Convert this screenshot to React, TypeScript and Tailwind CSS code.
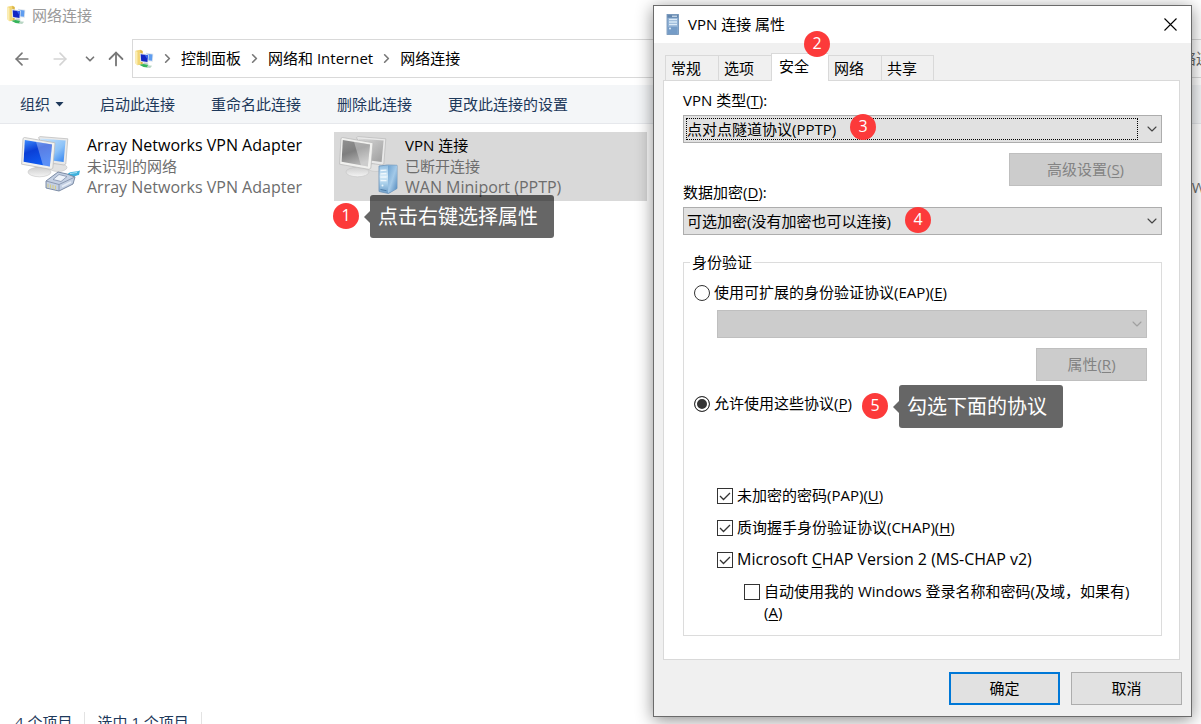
import { useState, type ReactNode } from "react";
import { ArrowLeft, ArrowRight, ArrowUp, ChevronDown, ChevronRight } from "lucide-react";

// Folder with a monitor and a green cable, used for "network connections"
function FolderIcon() {
  return (
    <svg viewBox="0 0 20 20" className="h-5 w-[19px] shrink-0" aria-hidden="true">
      <path d="M0.5 1.2 L5.5 0.2 L8 1.5 V15.5 L2.5 16.5 L0.5 14.5 Z" fill="#f3d675" />
      <path d="M0.5 1.2 L2.6 2.6 V16.5 L0.5 14.5 Z" fill="#fbeeb4" />
      <path d="M5.5 0.2 L8 1.5 V15.5 L6.5 15.8 Z" fill="#d9b447" />
      <path d="M11.5 3.5 L19.3 4.5 L18.8 13 L11.5 12 Z" fill="#dfe6ee" />
      <path d="M12.2 4.5 L18.4 5.3 L17.9 11.8 L12 11 Z" fill="#5f9df0" />
      <path d="M5 3.8 L14.5 5.2 L14 14.4 L5.6 13 Z" fill="#e3e8ee" />
      <path d="M6 5 L13.6 6.1 L13.1 13.2 L6.5 12 Z" fill="#1226c4" />
      <path d="M10 5.6 L13.6 6.1 L13.3 10.5 Z" fill="#3a68ee" />
      <path d="M9.5 13.8 L12.5 14 L14.5 15.5 L8 15.3 Z" fill="#c2c8ce" />
      <path d="M4.5 16 L9 15.2 L14 16 L13.3 19 L9 18.4 Z" fill="#35b45a" />
      <path d="M13.5 16.5 L18 17 L16 19.5 L12.5 19 Z" fill="#b9d6c4" />
    </svg>
  );
}

function ServerTower() {
  return (
    <>
      <defs>
        <linearGradient id="towerFront" x1="0" x2="0" y1="0" y2="1">
          <stop offset="0" stopColor="#8dbbe0" />
          <stop offset="0.4" stopColor="#d5ebf8" />
          <stop offset="0.65" stopColor="#a9cfea" />
          <stop offset="1" stopColor="#6b9cc8" />
        </linearGradient>
        <linearGradient id="towerSide" x1="0" x2="1" y1="0" y2="1">
          <stop offset="0" stopColor="#6fa3d0" />
          <stop offset="0.5" stopColor="#a3c9e8" />
          <stop offset="1" stopColor="#4f86ba" />
        </linearGradient>
      </defs>
      <path d="M0.5 1.5 L9 0.5 L18.5 0.8 V24 L10 29 L0.5 27 Z" fill="url(#towerFront)" stroke="#6c93b8" strokeWidth="0.8" />
      <path d="M9.5 1.2 L18.5 1 V24 L9.5 28.6 Z" fill="url(#towerSide)" />
      <path d="M2 6 L8 5.6 M2 9.3 L8 9 M2 12.6 L8 12.5 M2 16 L8 16.2" stroke="#f0f8fd" strokeWidth="1.3" />
      <circle cx="4" cy="21" r="1" fill="#eaf6fd" />
      <path d="M2 25 L8 26.2" stroke="#4b7ba6" strokeWidth="1" />
    </>
  );
}

function Monitors({ active }: { active: boolean }) {
  const screen = active ? "url(#screenOn)" : "url(#screenOff)";
  const back = active ? "url(#backOn)" : "url(#backOff)";
  return (
    <svg viewBox="0 0 60 60" className="h-[60px] w-[60px] shrink-0" aria-hidden="true">
      <defs>
        <linearGradient id="screenOn" x1="0" x2="0.4" y1="0" y2="1">
          <stop offset="0" stopColor="#3f8dfd" />
          <stop offset="0.45" stopColor="#0b3fd6" />
          <stop offset="1" stopColor="#0f5cf2" />
        </linearGradient>
        <linearGradient id="backOn" x1="0" x2="1" y1="0" y2="1">
          <stop offset="0" stopColor="#cfe7fb" />
          <stop offset="0.6" stopColor="#8cc2f8" />
          <stop offset="1" stopColor="#2d7ff0" />
        </linearGradient>
        <linearGradient id="screenOff" x1="0" x2="0.4" y1="0" y2="1">
          <stop offset="0" stopColor="#929292" />
          <stop offset="0.5" stopColor="#7f7f7f" />
          <stop offset="1" stopColor="#b5b5b5" />
        </linearGradient>
        <linearGradient id="backOff" x1="0" x2="1" y1="0" y2="1">
          <stop offset="0" stopColor="#dadada" />
          <stop offset="1" stopColor="#9d9d9d" />
        </linearGradient>
        <linearGradient id="stand" x1="0" x2="0" y1="0" y2="1">
          <stop offset="0" stopColor="#cdcdcd" />
          <stop offset="1" stopColor="#f4f4f4" />
        </linearGradient>
      </defs>
      <ellipse cx="37" cy="32.5" rx="9" ry="4" fill="#e2e2e2" stroke="#c4c4c4" strokeWidth="0.6" />
      <path d="M17.5 2.6 L19 1.6 L46.8 3.8 L44.8 29 L43 30 L30 28 Z" fill="#e9e9e9" stroke="#b9b9b9" strokeWidth="0.7" />
      <path d="M19 3.6 L44.6 5.6 L42.6 27 L31 25.4 Z" fill={back} />
      <path d="M15 30 L23 31 L25 37 L12.5 37 Z" fill="#d4d4d4" />
      <ellipse cx="18.5" cy="37" rx="11.5" ry="4.8" fill="url(#stand)" stroke="#c4c4c4" strokeWidth="0.6" />
      <path d="M2 3.4 L3.5 2.5 L34 7.8 L31.8 33.2 L30 34.4 L0.6 29.2 Z" fill="#f1f1ef" stroke="#b6b6b6" strokeWidth="0.7" />
      <path d="M3.8 5 L31 9.4 L28.8 31.6 L2.6 26.8 Z" fill={screen} />
      <path d="M15 6.8 L31 9.4 L28.8 31.6 L22 30.4 Z" fill="#fff" opacity="0.32" />
      {active ? (
        <g>
          <path d="M45 41 C49 35 52 38 59 35.5 L58 40 C54 40 52 44 47 45 Z" fill="#3fb1dc" />
          <path d="M49 38.5 L56 37.5" stroke="#a9e2f5" strokeWidth="1" />
          <path d="M25 46 L37 37 L46 39 L54 42 L52 49 L38 56 L25 53 Z" fill="#c4d0e3" stroke="#71819c" strokeWidth="0.9" />
          <path d="M25 46 L38 49.5 L54 42 M38 49.5 V56" fill="none" stroke="#8493ad" strokeWidth="0.9" />
          <path d="M32 44.5 L38 39.5 L46 41.5 L40 46.5 Z" fill="#eef3fa" stroke="#8291ac" strokeWidth="0.8" />
          <path d="M41 51.5 L50 47" stroke="#e6edf7" strokeWidth="1.8" />
          <path d="M27 48.8 V52.6 M29.5 49.5 V53.2 M32 50.1 V53.8 M34.5 50.7 V54.4" stroke="#d6cd8b" strokeWidth="1.1" />
        </g>
      ) : (
        <g transform="translate(39.5 29.5)">
          <ServerTower />
        </g>
      )}
    </svg>
  );
}

function Badge({ n, className }: { n: number; className: string }) {
  return (
    <span className={`absolute z-10 flex h-[26px] w-[26px] items-center justify-center rounded-full bg-[#fc3a3a] pb-0.5 text-base leading-none text-white ${className}`}>
      {n}
    </span>
  );
}

function Callout({ children, className }: { children: ReactNode; className: string }) {
  return (
    <div className={`absolute z-10 flex items-center ${className}`}>
      <span className="border-y-[6px] border-r-[6px] border-y-transparent border-r-black/60" />
      <span className="rounded-[3px] bg-black/60 py-[7px] pr-4 pl-2 text-xl leading-[29px] whitespace-nowrap text-white">{children}</span>
    </div>
  );
}

function Key({ children }: { children: string }) {
  return <span className="underline underline-offset-2">{children}</span>;
}

interface ConnectionProps {
  name: string;
  status: string;
  device: string;
  active: boolean;
}

function Connection({ name, status, device, active }: ConnectionProps) {
  return (
    <>
      <Monitors active={active} />
      <div className="ml-1.5 whitespace-nowrap text-[#6d6d6d]">
        <p className={active ? "text-base leading-[21px] text-black" : "text-black"}>{name}</p>
        <p>{status}</p>
        <p className="text-base leading-[21px]">{device}</p>
      </div>
    </>
  );
}

interface DropProps {
  id: string;
  value: string;
  label?: string;
  focused?: boolean;
  disabled?: boolean;
}

function Drop({ id, value, label, focused, disabled }: DropProps) {
  return (
    <div className="relative">
      <select
        id={id}
        aria-label={label}
        disabled={disabled}
        className="block h-7 w-full appearance-none border border-[#adadad] bg-[#e1e1e1] pr-7 pl-[3px] text-black opacity-100 outline-none disabled:border-[#bfbfbf] disabled:bg-[#cccccc]"
      >
        <option>{value}</option>
      </select>
      {focused && <span className="pointer-events-none absolute inset-y-[3px] right-6 left-[3px] border border-dotted border-black" />}
      <ChevronDown
        strokeWidth={1.6}
        className={`pointer-events-none absolute top-1.5 right-0.5 h-4 w-4 ${disabled ? "text-[#a0a0a0]" : "text-[#444]"}`}
      />
    </div>
  );
}

interface CheckProps {
  id: string;
  initial: boolean;
  className?: string;
  children: ReactNode;
}

function Check({ id, initial, className = "", children }: CheckProps) {
  const [checked, setChecked] = useState(initial);
  return (
    <div className={`flex items-start gap-1 ${className}`}>
      <span className="relative mt-[3px] h-4 w-4 shrink-0">
        <input
          id={id}
          type="checkbox"
          checked={checked}
          onChange={(e) => setChecked(e.target.checked)}
          className="block h-4 w-4 appearance-none border border-[#333] bg-white"
        />
        {checked && (
          <svg viewBox="0 0 16 16" className="pointer-events-none absolute inset-0" aria-hidden="true">
            <path d="M3 8 L6.5 11.5 L13 5" fill="none" stroke="#333" strokeWidth="1.3" />
          </svg>
        )}
      </span>
      <label htmlFor={id}>{children}</label>
    </div>
  );
}

interface RadioProps {
  id: string;
  checked: boolean;
  onSelect: () => void;
  children: ReactNode;
}

function Radio({ id, checked, onSelect, children }: RadioProps) {
  return (
    <div className="flex items-center gap-1">
      <input
        id={id}
        type="radio"
        name="auth"
        checked={checked}
        onChange={onSelect}
        className="h-4 w-4 appearance-none rounded-full border border-[#333] bg-white checked:bg-[#333] checked:shadow-[inset_0_0_0_2px_#fff]"
      />
      <label htmlFor={id}>{children}</label>
    </div>
  );
}

const tabs = ["常规", "选项", "安全", "网络", "共享"];
const crumbs = ["控制面板", "网络和 Internet", "网络连接"];
const commands = ["启动此连接", "重命名此连接", "删除此连接", "更改此连接的设置"];

function PropertiesDialog() {
  const [auth, setAuth] = useState("list");

  return (
    <section
      role="dialog"
      aria-labelledby="dialog-title"
      className="absolute top-[5px] right-[9px] w-[539px] border border-[#6b6b6b] bg-[#f0f0f0] text-black shadow-[0_3px_16px_rgba(0,0,0,0.45)]"
    >
      <header className="flex h-[37px] items-center bg-white pr-3.5 pl-3">
        <svg viewBox="0 0 14 21" className="h-[21px] w-3.5" aria-hidden="true">
          <rect x="1" y="0.5" width="11.5" height="20" fill="#8fb0d4" stroke="#6d8fb5" strokeWidth="0.8" />
          <rect x="1.4" y="0.8" width="10.7" height="3" fill="#6487ae" />
          <path d="M3 5.5 H11 M3 8 H11 M3 10.5 H11" stroke="#dcebf8" strokeWidth="1.3" />
          <path d="M6 2.2 H11" stroke="#e8f2fb" strokeWidth="1" />
          <rect x="2" y="13" width="9.5" height="7" fill="#759cc7" />
          <circle cx="4" cy="14.5" r="0.9" fill="#e8f4ff" />
        </svg>
        <h2 id="dialog-title" className="ml-2">VPN 连接 属性</h2>
        <button type="button" aria-label="关闭" className="ml-auto">
          <svg viewBox="0 0 13 13" className="h-[13px] w-[13px]" aria-hidden="true">
            <path d="M0.5 0.5 L12.5 12.5 M12.5 0.5 L0.5 12.5" stroke="#000" strokeWidth="1.1" />
          </svg>
        </button>
      </header>

      <div className="pt-2.5 pr-[11px] pl-[9px]">
        <div role="tablist" className="relative flex items-end pl-0.5">
          {tabs.map((tab) => (
            <button
              key={tab}
              type="button"
              role="tab"
              aria-selected={tab === "安全"}
              className={
                tab === "安全"
                  ? "relative -mb-px h-7 w-[57px] border-t border-l border-[#d9d9d9] bg-white pb-0.5 pl-[7px] text-left"
                  : "h-[25px] w-[53px] border-t border-l border-[#d9d9d9] pl-[5px] text-left last-of-type:border-r"
              }
            >
              {tab}
            </button>
          ))}
          <Badge n={2} className="-top-[22px] left-[141px]" />
        </div>

        <div role="tabpanel" className="border border-[#d9d9d9] bg-white pt-[9px] pr-[17px] pb-[23px] pl-[19px]">
          <label htmlFor="vpn-type" className="block">
            VPN 类型(<Key>T</Key>):
          </label>
          <div className="relative mt-1">
            <Drop id="vpn-type" value="点对点隧道协议(PPTP)" focused />
            <Badge n={3} className="-top-px left-[167px]" />
          </div>
          <div className="mt-2.5 flex items-start justify-between">
            <label htmlFor="encryption" className="pt-[29px]">
              数据加密(<Key>D</Key>):
            </label>
            <button type="button" disabled className="h-[33px] w-[153px] border border-[#bfbfbf] bg-[#cccccc] text-[#838383]">
              高级设置(<Key>S</Key>)
            </button>
          </div>
          <div className="relative mt-1">
            <Drop id="encryption" value="可选加密(没有加密也可以连接)" />
            <Badge n={4} className="top-0 left-[222px]" />
          </div>

          <fieldset className="mt-[17px] border border-[#dcdcdc] pb-3">
            <legend className="ml-1.5 px-0.5">身份验证</legend>
            <div className="mt-[9px] ml-2.5">
              <Radio id="eap" checked={auth === "eap"} onSelect={() => setAuth("eap")}>
                使用可扩展的身份验证协议(EAP)(<Key>E</Key>)
              </Radio>
            </div>
            <div className="mt-[7px] mr-3.5 ml-[33px]">
              <Drop id="eap-type" label="EAP" value="" disabled />
              <button type="button" disabled className="mt-2.5 ml-auto block h-[33px] w-[111px] border border-[#bfbfbf] bg-[#cccccc] text-[#838383]">
                属性(<Key>R</Key>)
              </button>
            </div>
            <div className="relative mt-3 ml-2.5">
              <Radio id="protocols" checked={auth === "list"} onSelect={() => setAuth("list")}>
                允许使用这些协议(<Key>P</Key>)
              </Radio>
              <Badge n={5} className="top-0 left-[168px]" />
              <Callout className="-top-2 left-[199px]">勾选下面的协议</Callout>
            </div>
            <div className="mt-[71px] ml-[33px] flex flex-col gap-[11px]">
              <Check id="pap" initial>
                未加密的密码(PAP)(<Key>U</Key>)
              </Check>
              <Check id="chap" initial>
                质询握手身份验证协议(CHAP)(<Key>H</Key>)
              </Check>
              <Check id="mschap" initial>
                <span className="text-base leading-[21px]">
                  Microsoft <Key>C</Key>HAP Version 2 (MS-CHAP v2)
                </span>
              </Check>
              <Check id="auto" initial={false} className="ml-[27px]">
                自动使用我的 Windows 登录名称和密码(及域，如果有)
                <br />(<Key>A</Key>)
              </Check>
            </div>
          </fieldset>
        </div>
      </div>

      <footer className="flex justify-end gap-[11px] pt-3 pr-[9px] pb-[11px]">
        <button type="button" className="h-[33px] w-[111px] border-2 border-[#0078d7] bg-[#e1e1e1]">
          确定
        </button>
        <button type="button" className="h-[33px] w-[111px] border border-[#adadad] bg-[#e1e1e1]">
          取消
        </button>
      </footer>
    </section>
  );
}

export default function App() {
  return (
    <div className="relative flex h-screen flex-col overflow-hidden bg-white font-['Open_Sans','Noto_Sans_CJK_SC',sans-serif] text-[15px] leading-[21px] text-black">
      <header className="flex h-[39px] items-start gap-1.5 pt-[5px] pl-[7px] text-[#999]">
        <FolderIcon />
        <h1>网络连接</h1>
      </header>

      <div className="flex h-[39px]">
        <div className="flex w-[132px] shrink-0 items-center pl-3 text-[#777]">
          <button type="button" aria-label="后退">
            <ArrowLeft className="h-5 w-5" strokeWidth={2} />
          </button>
          <button type="button" aria-label="前进" className="ml-[18px] text-[#d4d4d4]">
            <ArrowRight className="h-5 w-5" strokeWidth={2} />
          </button>
          <button type="button" aria-label="历史" className="ml-[13px]">
            <ChevronDown className="h-3.5 w-3.5" strokeWidth={3} />
          </button>
          <button type="button" aria-label="向上" className="ml-2">
            <ArrowUp className="h-[22px] w-[22px]" strokeWidth={2} />
          </button>
        </div>
        <nav className="flex grow items-center overflow-hidden border-y border-l border-[#d9d9d9] pl-0.5 whitespace-nowrap">
          <FolderIcon />
          {crumbs.map((crumb) => (
            <span key={crumb} className="flex items-center">
              <ChevronRight className="mx-1.5 h-[15px] w-[15px] text-[#777]" strokeWidth={2.6} />
              <a href="#">{crumb}</a>
            </span>
          ))}
          <span className="ml-auto w-5 text-[#666]">络连</span>
        </nav>
      </div>

      <div className="mt-[7px] flex h-[39px] shrink-0 items-center gap-9 border-b border-[#e6e8ec] bg-[#f4f6f8] pl-5 text-[#1e395b]">
        <button type="button" className="flex items-center gap-[5px]">
          组织
          <svg viewBox="0 0 9 5" className="h-[5px] w-[9px]" aria-hidden="true">
            <path d="M0.5 0 H8.5 L4.5 4.5 Z" fill="#1e395b" />
          </svg>
        </button>
        {commands.map((command) => (
          <button key={command} type="button">
            {command}
          </button>
        ))}
      </div>

      <main className="flex grow items-start pt-2">
        <div className="flex w-[334px] shrink-0 pt-[3px] pl-[21px]">
          <Connection name="Array Networks VPN Adapter" status="未识别的网络" device="Array Networks VPN Adapter" active />
        </div>
        <div className="relative flex h-[69px] w-[313px] shrink-0 bg-[#d9d9d9] pt-[3px] pl-[5px]">
          <Connection name="VPN 连接" status="已断开连接" device="WAN Miniport (PPTP)" active={false} />
          <Badge n={1} className="top-[71px] -left-px" />
          <Callout className="top-[63px] left-[30px]">点击右键选择属性</Callout>
        </div>
        <p className="mt-[45px] ml-auto w-3.5 whitespace-nowrap text-[#6d6d6d]">-W</p>
      </main>

      <footer className="flex h-3 shrink-0 text-[#1e395b]">
        <span className="pl-[15px]">4 个项目</span>
        <span className="mx-3 h-5 border-l border-[#e3e3e3]" />
        <span>选中 1 个项目</span>
        <span className="mx-3 h-5 border-l border-[#e3e3e3]" />
      </footer>

      <PropertiesDialog />
    </div>
  );
}
